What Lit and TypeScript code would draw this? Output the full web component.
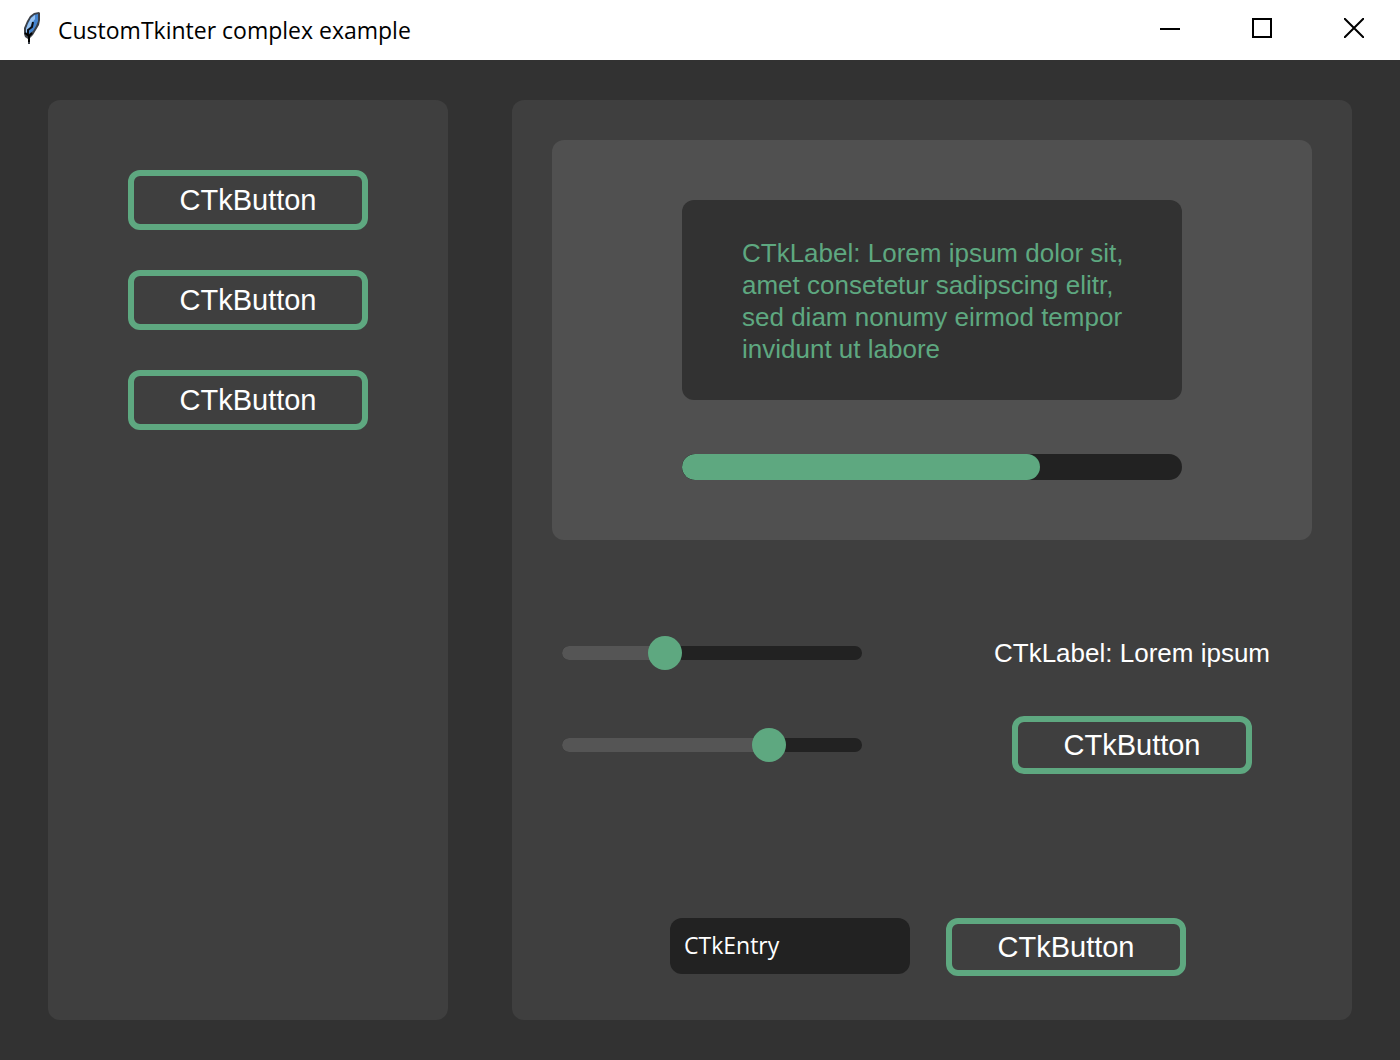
import { LitElement, html, css, svg } from "lit";
import { customElement, property, state } from "lit/decorators.js";

@customElement("ctk-slider")
class CtkSlider extends LitElement {
  static styles = css`
    :host {
      display: block;
    }
    .slider {
      display: grid;
      align-items: center;
      height: 34px;
    }
    .track,
    .range {
      grid-area: 1 / 1;
    }
    .track {
      height: 14px;
      border-radius: 7px;
      overflow: hidden;
      background: #222222;
    }
    .fill {
      height: 100%;
      background: #555555;
    }
    .range {
      appearance: none;
      width: 100%;
      height: 34px;
      margin: 0;
      background: transparent;
      cursor: pointer;
    }
    .range::-webkit-slider-thumb {
      appearance: none;
      width: 34px;
      height: 34px;
      border: 0;
      border-radius: 50%;
      background: #5ea880;
    }
    .range::-moz-range-thumb {
      width: 34px;
      height: 34px;
      border: 0;
      border-radius: 50%;
      background: #5ea880;
    }
  `;

  @property() label = "";
  @property({ type: Number }) value = 0;

  private onInput(e: Event) {
    this.value = Number((e.target as HTMLInputElement).value);
  }

  render() {
    return html`
      <div class="slider">
        <div class="track"><div class="fill" style="width:${this.value}%"></div></div>
        <input
          class="range"
          type="range"
          min="0"
          max="100"
          step="0.1"
          aria-label=${this.label}
          .value=${String(this.value)}
          @input=${this.onInput}
        />
      </div>
    `;
  }
}

const feather = svg`
  <path d="M19 1 L14 2 L10 5 L7 10 L4 17 L4 23 L5 26 L8 28 L8 33 L10 33 L10 27 L13 24 L16 19 L19 14 L20 9 L20 2 Z" fill="#3c4149"/>
  <path d="M18 3 L14 4 L11 7 L8 12 L6 18 L6 23 L9 23 L13 20 L16 15 L18 10 Z" fill="#4484cf"/>
  <path d="M15 4 L11 7 L8 13 L6 18 L6 22 L8 20 L10 16 L12 12 L15 8 Z" fill="#98c3f1"/>
  <path d="M13 11 L12 16 L8 19 L8 24" fill="none" stroke="#0b0d12" stroke-width="2"/>
  <path d="M5 22 L9 25 L12 22 M9 24 L9 31" fill="none" stroke="#000" stroke-width="2"/>
`;

@customElement("app-root")
class AppRoot extends LitElement {
  static styles = css`
    :host {
      display: block;
      font-family: "Liberation Sans", Arial, sans-serif;
      color: #ffffff;
    }
    .window {
      display: flex;
      flex-direction: column;
      min-height: 100vh;
      background: #323232;
    }
    .titlebar {
      display: flex;
      align-items: center;
      height: 60px;
      background: #ffffff;
      color: #000000;
    }
    .logo {
      width: 24px;
      height: 34px;
      margin: 0 14px 4px 20px;
    }
    .title {
      flex: 1;
      margin: 0;
      font: 400 23px/32px "Open Sans", "Noto Sans", sans-serif;
    }
    .caption {
      display: grid;
      place-items: center;
      width: 92px;
      height: 60px;
      padding: 0 0 4px;
      border: 0;
      background: none;
    }
    .body {
      flex: 1;
      display: grid;
      grid-template-columns: 10fr 21fr;
      gap: 64px;
      padding: 40px 48px;
    }
    .side,
    .main {
      border-radius: 12px;
      background: #3f3f3f;
    }
    .side {
      display: flex;
      flex-direction: column;
      align-items: center;
      gap: 40px;
      padding-top: 70px;
    }
    .main {
      display: flex;
      flex-direction: column;
      justify-content: space-between;
      padding: 40px 40px 44px;
    }
    .button {
      width: 240px;
      height: 60px;
      padding: 0;
      border: 6px solid #5ea880;
      border-radius: 12px;
      background: transparent;
      color: inherit;
      font-family: inherit;
      font-size: 29px;
      line-height: 32px;
      cursor: pointer;
    }
    .button:hover {
      background: #505050;
    }
    .short {
      height: 58px;
    }
    .info {
      display: flex;
      flex-direction: column;
      align-items: center;
      gap: 54px;
      padding: 60px;
      border-radius: 12px;
      background: #505050;
    }
    .message {
      box-sizing: border-box;
      width: 500px;
      max-width: 100%;
      margin: 0;
      padding: 37px 56px 35px 60px;
      border-radius: 12px;
      background: #323232;
      color: #5ea880;
      font-size: 26px;
      line-height: 32px;
    }
    .progress {
      width: 500px;
      max-width: 100%;
      height: 26px;
      border-radius: 13px;
      overflow: hidden;
      background: #222222;
    }
    .bar {
      height: 100%;
      border-radius: 13px;
      background: #5ea880;
    }
    .controls {
      display: grid;
      grid-template-columns: 1fr 360px;
      row-gap: 46px;
      align-items: center;
      padding-bottom: 48px;
    }
    .slider {
      width: 300px;
      margin-left: 10px;
    }
    .label {
      margin: 0;
      text-align: center;
      font-size: 26px;
      line-height: 34px;
    }
    .center {
      justify-self: center;
    }
    .form {
      display: flex;
      justify-content: center;
      align-items: flex-start;
      gap: 36px;
      padding-right: 8px;
    }
    .entry {
      box-sizing: border-box;
      width: 240px;
      height: 56px;
      padding: 0 14px 2px;
      border: 0;
      border-radius: 12px;
      background: #222222;
      color: inherit;
      font: 400 23px/32px "Open Sans", "Noto Sans", sans-serif;
    }
    .entry::placeholder {
      color: #ffffff;
      opacity: 1;
    }
  `;

  @state() private progress = 71.6;

  render() {
    return html`
      <div class="window">
        <header class="titlebar">
          <svg class="logo" viewBox="0 0 24 34" aria-hidden="true">${feather}</svg>
          <h1 class="title">CustomTkinter complex example</h1>
          <button class="caption" aria-label="Minimize">
            <svg width="20" height="20" viewBox="0 0 20 20"><path d="M0 11H20" stroke="#000" stroke-width="2" /></svg>
          </button>
          <button class="caption" aria-label="Maximize">
            <svg width="20" height="20" viewBox="0 0 20 20">
              <path d="M1 1H19V19H1Z" fill="none" stroke="#000" stroke-width="2" />
            </svg>
          </button>
          <button class="caption" aria-label="Close">
            <svg width="20" height="20" viewBox="0 0 20 20">
              <path d="M0 0L20 20M20 0L0 20" stroke="#000" stroke-width="2" />
            </svg>
          </button>
        </header>
        <div class="body">
          <aside class="side">
            ${[1, 2, 3].map(() => html`<button class="button">CTkButton</button>`)}
          </aside>
          <main class="main">
            <section class="info">
              <p class="message">
                CTkLabel: Lorem ipsum dolor sit,<br />amet consetetur sadipscing elitr,<br />sed diam nonumy eirmod
                tempor<br />invidunt ut labore
              </p>
              <div class="progress" role="progressbar" aria-label="Progress" aria-valuenow=${this.progress}>
                <div class="bar" style="width:${this.progress}%"></div>
              </div>
            </section>
            <section class="controls">
              <ctk-slider class="slider" label="First value" value="32.4"></ctk-slider>
              <p class="label">CTkLabel: Lorem ipsum</p>
              <ctk-slider class="slider" label="Second value" value="71.4"></ctk-slider>
              <button class="button short center">CTkButton</button>
            </section>
            <form class="form" @submit=${(e: Event) => e.preventDefault()}>
              <input class="entry" type="text" aria-label="CTkEntry" placeholder="CTkEntry" />
              <button class="button short" type="submit">CTkButton</button>
            </form>
          </main>
        </div>
      </div>
    `;
  }
}
